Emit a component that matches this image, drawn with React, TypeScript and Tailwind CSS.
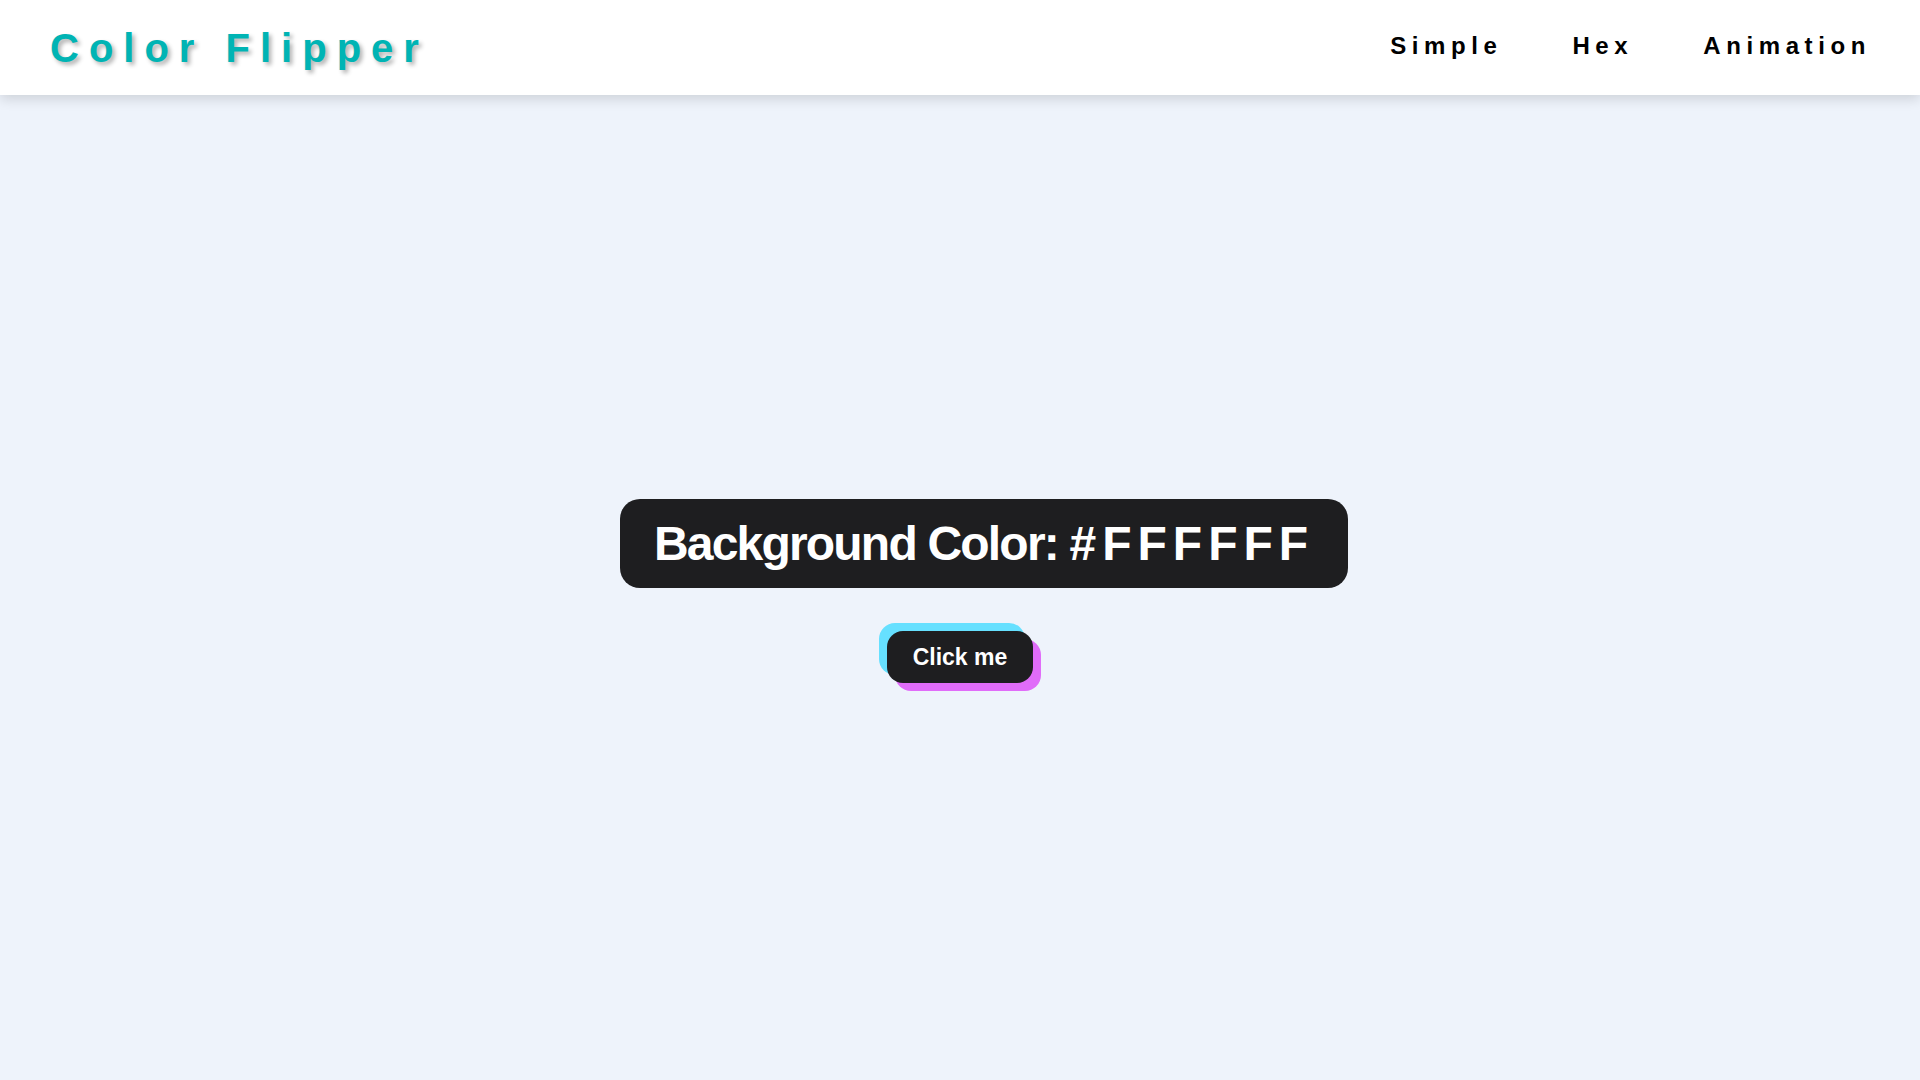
import React from "react";

export default function App() {
  return (
    <div className="min-h-screen bg-[#eef3fb] font-['Liberation_Sans',Arial,sans-serif]">
      <nav className="relative z-10 flex h-[95px] items-center justify-between bg-white pl-[50px] pr-[49px] shadow-[0_4px_12px_rgba(0,0,0,0.14)]">
        <div className="text-[40px] font-bold leading-[46px] tracking-[10px] text-[#00b4b4] [text-shadow:3px_3px_4px_rgba(0,0,0,0.3)]">
          Color Flipper
        </div>
        <ul className="flex items-center gap-[70px] pb-[3px]">
          <li className="text-[24px] font-bold leading-[28px] tracking-[5.6px] text-black">Simple</li>
          <li className="text-[24px] font-bold leading-[28px] tracking-[5.6px] text-black">Hex</li>
          <li className="text-[24px] font-bold leading-[28px] tracking-[5.6px] text-black">Animation</li>
        </ul>
      </nav>
      <main className="flex min-h-[985px] flex-col items-center pt-[404px]">
        <h2 className="ml-[48px] rounded-[20px] bg-[#1e1e20] px-[34px] py-[17px] text-[48px] font-bold leading-[55px] text-white">
          <span className="tracking-[-1.8px]">Background Color: </span>
          <span className="tracking-[6px]">#FFFFFF</span>
        </h2>
        <button className="mt-[43px] rounded-[16px] bg-[#1e1e20] px-[26px] py-[13px] text-[23px] font-bold leading-[26px] text-white shadow-[-8px_-8px_0_#66e0ff,8px_8px_0_#e06cf9]">
          Click me
        </button>
      </main>
    </div>
  );
}
